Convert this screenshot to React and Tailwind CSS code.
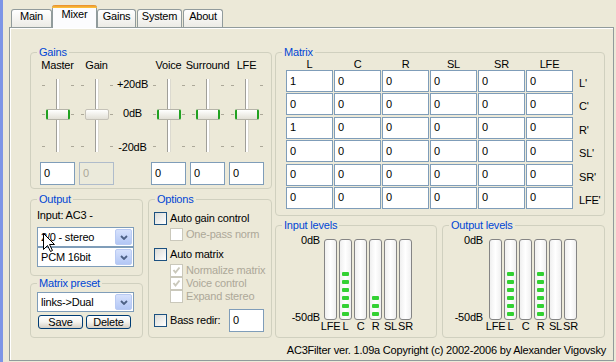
import React from "react";

const FONT = "font-['Liberation_Sans',Arial,sans-serif]";

function Group({ title, className = "", children }) {
  return (
    <fieldset className={`min-w-0 border border-[#D0D0BF] rounded-[4px] ${className}`}>
      <legend className="ml-[6px] px-[2px] text-[#0046D5] leading-[13px]">{title}</legend>
      {children}
    </fieldset>
  );
}

function Edit({ value, className = "", disabled }) {
  return (
    <div
      className={`h-[23px] w-[35px] border flex items-center pl-[3px] ${
        disabled ? "border-[#AFBCCB] bg-[#EBEADB] text-[#ACA899]" : "border-[#7F9DB9] bg-white"
      } ${className}`}
    >
      {value}
    </div>
  );
}

const TICK_TOPS = ["top-[6px]", "top-[35px]", "top-[67px]"];

function Slider({ disabled }) {
  return (
    <div className="relative w-[39px] h-[73px]">
      {TICK_TOPS.map((t) => (
        <React.Fragment key={t}>
          <div className={`absolute left-[4px] ${t} w-[3px] h-px bg-[#ACA899]`} />
          <div className={`absolute left-[33px] ${t} w-[3px] h-px bg-[#ACA899]`} />
        </React.Fragment>
      ))}
      <div className="absolute left-[18px] top-0 h-full w-[4px] border-l border-l-[#A09F99] border-r border-r-[#DCDAD0] bg-white" />
      <div
        className={`absolute left-[8px] top-[30px] w-[24px] h-[11px] rounded-[2px] bg-linear-to-b from-white to-[#E2E0D6] ${
          disabled ? "border border-[#C5C2B8]" : "border-y border-y-[#B5B3A8] border-x-2 border-x-[#21A121]"
        }`}
      />
    </div>
  );
}

function GainCol({ label, value, disabled }) {
  return (
    <div className="w-[39px] flex flex-col items-center">
      <div className="h-[13px] whitespace-nowrap">{label}</div>
      <div className="mt-[7px]">
        <Slider disabled={disabled} />
      </div>
      <Edit value={value} disabled={disabled} className="mt-[10px]" />
    </div>
  );
}

function Combo({ text, className = "" }) {
  return (
    <div className={`w-[97px] h-[20px] border border-[#7F9DB9] bg-white flex items-center ${className}`}>
      <span className="pl-[3px] flex-1 whitespace-nowrap overflow-hidden">{text}</span>
      <div className="w-[17px] h-[16px] mr-[1px] rounded-[2px] border border-[#B9CAF3] bg-linear-to-b from-[#D6E1FC] to-[#B3C7F5] flex items-center justify-center">
        <svg width="8" height="5" viewBox="0 0 8 5">
          <path d="M1 1 L4 4 L7 1" stroke="#4D6185" strokeWidth="1.8" fill="none" />
        </svg>
      </div>
    </div>
  );
}

function Check({ disabled, checked }) {
  return (
    <div
      className={`w-[13px] h-[13px] shrink-0 border flex items-center justify-center ${
        disabled ? "border-[#CAC8BB] bg-white" : "border-[#1C5180] bg-linear-to-br from-[#DCDCD7] to-white"
      }`}
    >
      {checked && (
        <svg width="9" height="9" viewBox="0 0 9 9">
          <path d="M1.5 4 L3.5 6.5 L7.5 1.5" stroke={disabled ? "#CAC8BB" : "#21A121"} strokeWidth="2" fill="none" />
        </svg>
      )}
    </div>
  );
}

function CheckRow({ label, disabled, checked, className = "" }) {
  return (
    <div className={`flex items-center gap-[3px] h-[13px] ${className}`}>
      <Check disabled={disabled} checked={checked} />
      <span className={`whitespace-nowrap ${disabled ? "text-[#ACA899]" : ""}`}>{label}</span>
    </div>
  );
}

function Btn({ children }) {
  return (
    <div className="w-[45px] h-[14px] border border-[#003C74] rounded-[3px] bg-linear-to-b from-white via-[#F4F3EE] to-[#D6D0C5] flex items-center justify-center leading-[12px]">
      {children}
    </div>
  );
}

const CHANNELS = ["LFE", "L", "C", "R", "SL", "SR"];

function Levels({ title, labelW, gapW, dots, className = "" }) {
  return (
    <Group title={title} className={className}>
      <div className="pt-[7px] flex items-start">
        <div className={`${labelW} -mt-[5px] h-[90px] flex flex-col justify-between items-end`}>
          <span>0dB</span>
          <span>-50dB</span>
        </div>
        <div className={`${gapW} flex flex-col`}>
          <div className="flex gap-[2px]">
            {dots.map((n, i) => (
              <div
                key={i}
                className="w-[13px] h-[81px] border border-[#858585] rounded-[3px] bg-linear-to-r from-[#F0F0F0] via-white to-[#F0F0F0] flex flex-col justify-end items-center gap-[4px] pb-[3px]"
              >
                {Array.from({ length: n }).map((_, j) => (
                  <div key={j} className="w-[7px] h-[4px] rounded-[1px] bg-[#33D133]" />
                ))}
              </div>
            ))}
          </div>
          <div className="flex gap-[2px]">
            {CHANNELS.map((c) => (
              <div key={c} className="w-[13px] flex justify-center whitespace-nowrap">
                {c}
              </div>
            ))}
          </div>
        </div>
      </div>
    </Group>
  );
}

const MATRIX = [
  ["L'", [1, 0, 0, 0, 0, 0]],
  ["C'", [0, 0, 0, 0, 0, 0]],
  ["R'", [1, 0, 0, 0, 0, 0]],
  ["SL'", [0, 0, 0, 0, 0, 0]],
  ["SR'", [0, 0, 0, 0, 0, 0]],
  ["LFE'", [0, 0, 0, 0, 0, 0]],
];

function Tab({ w, children }) {
  return (
    <div
      className={`${w} h-[18px] rounded-t-[3px] border-t border-x border-[#919B9C] bg-linear-to-b from-white to-[#ECEBE6] text-center`}
    >
      {children}
    </div>
  );
}

function Tabs() {
  return (
    <div className="pl-[2px] h-[22px] flex items-end">
      <Tab w="w-[41px]">Main</Tab>
      <div className="relative z-10 mb-[-1px] h-[23px] w-[45px] rounded-t-[3px] border-x border-[#919B9C] bg-[#FCFCFE] flex flex-col">
        <div className="h-[3px] -mx-px rounded-t-[3px] bg-linear-to-b from-[#E68B2C] to-[#FFC73C]" />
        <div className="text-center">Mixer</div>
      </div>
      <Tab w="w-[39px]">Gains</Tab>
      <div className="ml-[1px]">
        <Tab w="w-[45px]">System</Tab>
      </div>
      <div className="ml-[1px]">
        <Tab w="w-[40px]">About</Tab>
      </div>
    </div>
  );
}

export default function App() {
  return (
    <div
      className={`relative w-[616px] h-[362px] overflow-hidden bg-[#ECE9D8] flex text-[11px] leading-[13px] tracking-[-0.2px] text-black ${FONT}`}
    >
      <div className="w-[3px] h-full bg-[#7D95E6]" />
      <div className="ml-[6px] pt-[5px] flex flex-col">
        <Tabs />
        <div className="w-[605px] h-[334px] border border-[#919B9C] bg-[#ECE9D8] shadow-[inset_1px_1px_0_#fff] flex flex-col">
          <div className="pl-[20px] pt-[18px] flex gap-x-[3px]">
            {/* Left column */}
            <div className="w-[242px] flex flex-col">
              <Group title="Gains" className="h-[143px]">
                <div className="flex pl-[7px]">
                  <GainCol label="Master" value="0" />
                  <GainCol label="Gain" value="0" disabled />
                  <div className="w-[33px] flex flex-col items-center whitespace-nowrap">
                    <div className="h-[19px]" />
                    <div>+20dB</div>
                    <div className="mt-[16px]">0dB</div>
                    <div className="mt-[21px]">-20dB</div>
                  </div>
                  <GainCol label="Voice" value="0" />
                  <GainCol label="Surround" value="0" />
                  <GainCol label="LFE" value="0" />
                </div>
              </Group>

              <div className="mt-[4px] flex gap-x-[5px]">
                <div className="w-[113px] flex flex-col">
                  <Group title="Output" className="h-[83px]">
                    <div className="pl-[6px]">
                      <div className="mt-[3px] whitespace-nowrap">Input: AC3 -</div>
                      <Combo text="2/0 - stereo" className="mt-[5px]" />
                      <Combo text="PCM 16bit" />
                    </div>
                  </Group>
                  <Group title="Matrix preset" className="mt-[1px] h-[61px]">
                    <div className="pl-[6px]">
                      <Combo text="links->Dual" className="mt-[2px]" />
                      <div className="mt-[3px] ml-[1px] flex gap-x-[3px]">
                        <Btn>Save</Btn>
                        <Btn>Delete</Btn>
                      </div>
                    </div>
                  </Group>
                </div>

                <Group title="Options" className="w-[124px] h-[145px]">
                  <div className="pl-[5px] flex flex-col">
                    <CheckRow label="Auto gain control" className="mt-[6px]" />
                    <CheckRow label="One-pass norm" disabled className="mt-[3px] ml-[16px]" />
                    <CheckRow label="Auto matrix" className="mt-[7px]" />
                    <CheckRow label="Normalize matrix" disabled checked className="mt-[3px] ml-[16px]" />
                    <CheckRow label="Voice control" disabled checked className="ml-[16px]" />
                    <CheckRow label="Expand stereo" disabled className="ml-[16px]" />
                    <div className="mt-[6px] h-[23px] flex items-center">
                      <Check />
                      <span className="ml-[3px] w-[59px] whitespace-nowrap">Bass redir:</span>
                      <Edit value="0" />
                    </div>
                  </div>
                </Group>
              </div>
            </div>

            {/* Right column */}
            <div className="w-[330px] flex flex-col">
              <Group title="Matrix" className="h-[170px]">
                <div className="pl-[10px]">
                  <div className="-mt-[1px] h-[12px] leading-[12px] grid grid-cols-[repeat(6,47px)] gap-x-[1px]">
                    {["L", "C", "R", "SL", "SR", "LFE"].map((h) => (
                      <div key={h} className="text-center">
                        {h}
                      </div>
                    ))}
                  </div>
                  <div className="grid grid-cols-[repeat(6,47px)_auto] gap-x-[1px] gap-y-[1.4px]">
                    {MATRIX.map(([name, vals]) => (
                      <React.Fragment key={name}>
                        {vals.map((v, i) => (
                          <div key={i} className="h-[22px] border border-[#7F9DB9] bg-white flex items-center pl-[3px]">
                            {v}
                          </div>
                        ))}
                        <div className="h-[22px] pl-[5px] pt-[7px] whitespace-nowrap">{name}</div>
                      </React.Fragment>
                    ))}
                  </div>
                </div>
              </Group>

              <div className="mt-[3px] flex gap-x-[5px]">
                <Levels title="Input levels" labelW="w-[44px]" gapW="ml-[4px]" dots={[0, 6, 0, 3, 0, 0]} className="w-[162px] h-[119px]" />
                <Levels title="Output levels" labelW="w-[40px]" gapW="ml-[6px]" dots={[0, 6, 0, 6, 0, 0]} className="w-[163px] h-[119px]" />
              </div>
            </div>
          </div>

          <div className="mt-[6px] pr-[7px] text-right whitespace-nowrap">
            AC3Filter ver. 1.09a Copyright (c) 2002-2006 by Alexander Vigovsky
          </div>
        </div>
      </div>

      <svg className="absolute left-[43px] top-[233px]" width="13" height="20" viewBox="0 0 13 20">
        <path
          d="M0.5 0.5 L0.5 16.5 L4.5 12.5 L7.5 18.5 L9.5 17.5 L6.5 11.5 L11.5 11.5 Z"
          fill="#fff"
          stroke="#000"
          strokeWidth="1"
        />
      </svg>
    </div>
  );
}
